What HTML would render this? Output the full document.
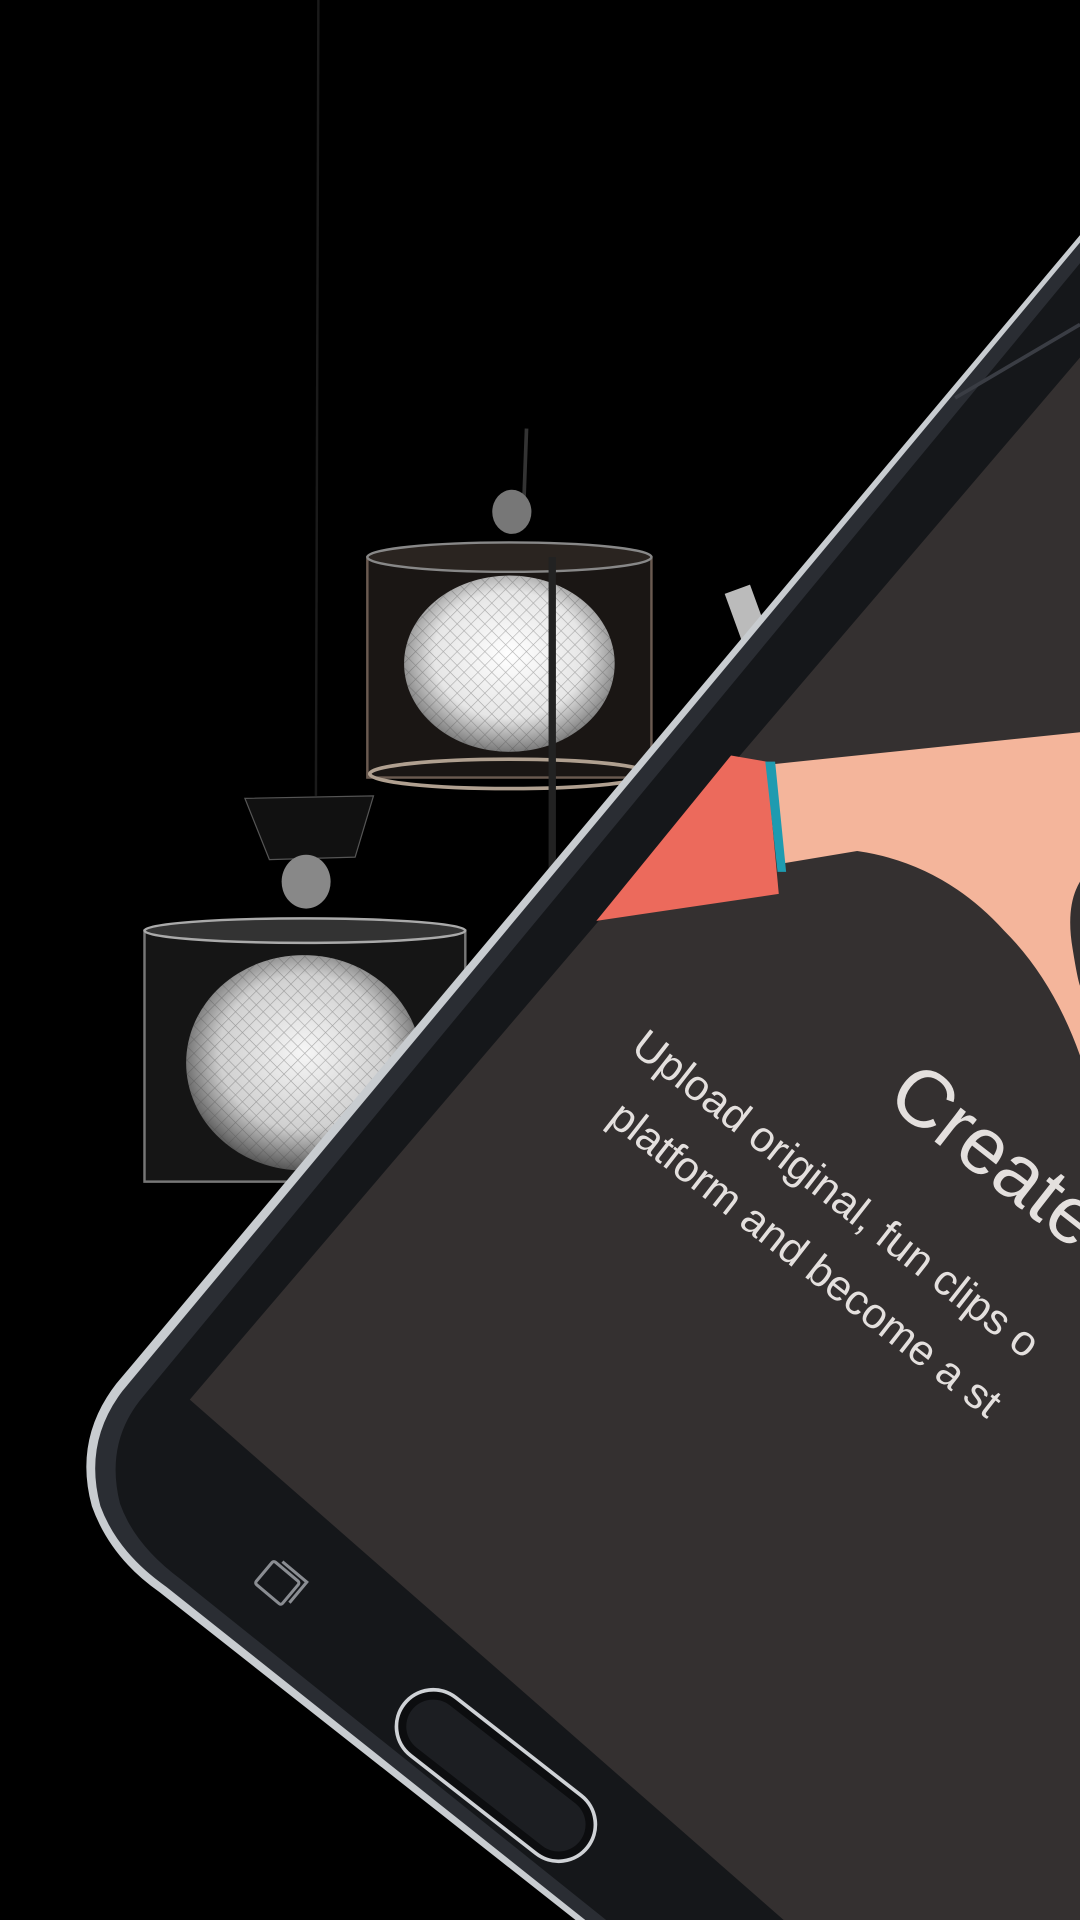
<!DOCTYPE html>
<html><head><meta charset="utf-8"><style>
html,body{margin:0;padding:0;background:#000;width:1080px;height:1920px;overflow:hidden}
svg{display:block}
</style></head><body>
<svg width="1080" height="1920" viewBox="0 0 882 1568" xmlns="http://www.w3.org/2000/svg">
<defs>
<radialGradient id="ball" cx="50%" cy="45%" r="55%">
<stop offset="0" stop-color="#fff"/><stop offset="0.65" stop-color="#e6e6e6"/><stop offset="1" stop-color="#7a7a7a"/>
</radialGradient>
<radialGradient id="ball2" cx="50%" cy="45%" r="55%">
<stop offset="0" stop-color="#f6f6f6"/><stop offset="0.65" stop-color="#d0d0d0"/><stop offset="1" stop-color="#555"/>
</radialGradient>
<pattern id="mesh" width="8" height="8" patternUnits="userSpaceOnUse" patternTransform="rotate(45)">
<rect width="8" height="8" fill="none"/><path d="M0 0H8M0 0V8" stroke="#444" stroke-width="1" opacity="0.4"/>
</pattern>
</defs>
<rect width="882" height="1568" fill="#000"/>
<line x1="260" y1="0" x2="258" y2="650" stroke="#1a1a1a" stroke-width="2"/>
<line x1="430" y1="350" x2="428" y2="405" stroke="#333" stroke-width="3"/>
<ellipse cx="418" cy="418" rx="16" ry="18" fill="#777"/>
<rect x="300" y="455" width="232" height="180" fill="#1a1614" stroke="#6a5a50" stroke-width="2"/>
<ellipse cx="416" cy="455" rx="116" ry="12" fill="#2a2420" stroke="#888" stroke-width="2"/>
<ellipse cx="416" cy="632" rx="114" ry="12" fill="none" stroke="#b0a090" stroke-width="3"/>
<ellipse cx="416" cy="542" rx="86" ry="72" fill="url(#ball)"/>
<ellipse cx="416" cy="542" rx="86" ry="72" fill="url(#mesh)"/>
<rect x="448" y="455" width="6" height="260" fill="#222"/>
<rect x="598" y="480" width="22" height="40" fill="#bbb" transform="rotate(-20 609 500)"/>
<path d="M200 652 L305 650 L290 700 L220 702 Z" fill="#111" stroke="#555"/>
<ellipse cx="250" cy="720" rx="20" ry="22" fill="#888"/>
<rect x="118" y="760" width="262" height="205" fill="#151515" stroke="#777" stroke-width="2"/>
<ellipse cx="249" cy="760" rx="131" ry="10" fill="#333" stroke="#aaa" stroke-width="2"/>
<ellipse cx="248" cy="868" rx="96" ry="88" fill="url(#ball2)"/>
<ellipse cx="248" cy="868" rx="96" ry="88" fill="url(#mesh)"/>
<path d="M882 192 L95 1130 Q60 1175 75 1230 Q90 1272 130 1300 L470 1568 L882 1568 Z" fill="#c8ccd0"/>
<path d="M882 198 L100 1136 Q68 1178 82 1230 Q96 1268 136 1296 L478 1568 L882 1568 Z" fill="#2a2d33"/>
<path d="M882 215 L114 1144 Q86 1180 98 1228 Q110 1262 148 1290 L495 1568 L882 1568 Z" fill="#15171a"/>
<path d="M882 265 L780 325" stroke="#3a3d44" stroke-width="3"/>
<path d="M882 292 L155 1143 L640 1568 L882 1568 Z" fill="#343030"/>
<path d="M632 624 L882 598 L882 862 Q860 800 820 760 Q770 705 700 695 L640 705 Z" fill="#f4b59b"/>
<path d="M882 720 Q870 740 876 775 Q880 800 882 805 Z" fill="#343030"/>
<path d="M487 752 L597 617 L626 622 L636 730 Z" fill="#ec6a5c"/>
<path d="M625 622 L633 622 L642 712 L635 712 Z" fill="#1e9bb0"/>
<g fill="#e4e0de" font-family="Liberation Sans, sans-serif">
<text x="722" y="900" font-size="66" transform="rotate(38 722 900)">Create</text>
<text x="514" y="858" font-size="35" transform="rotate(38 514 858)">Upload original, fun clips o</text>
<text x="495" y="916" font-size="35" transform="rotate(38 495 916)">platform and become a st</text>
</g>
<g transform="rotate(40 228 1294)" fill="none" stroke="#8a8d92" stroke-width="2.5">
<rect x="212" y="1282" width="28" height="24" rx="2"/>
<path d="M218 1278 H244 V1300"/>
</g>
<g transform="rotate(38 405 1450)">
<rect x="310" y="1420" width="190" height="60" rx="30" fill="#0c0d0f" stroke="#cfd2d6" stroke-width="3"/>
<rect x="318" y="1428" width="174" height="44" rx="22" fill="#1c1e22"/>
</g>
</svg>
</body></html>
